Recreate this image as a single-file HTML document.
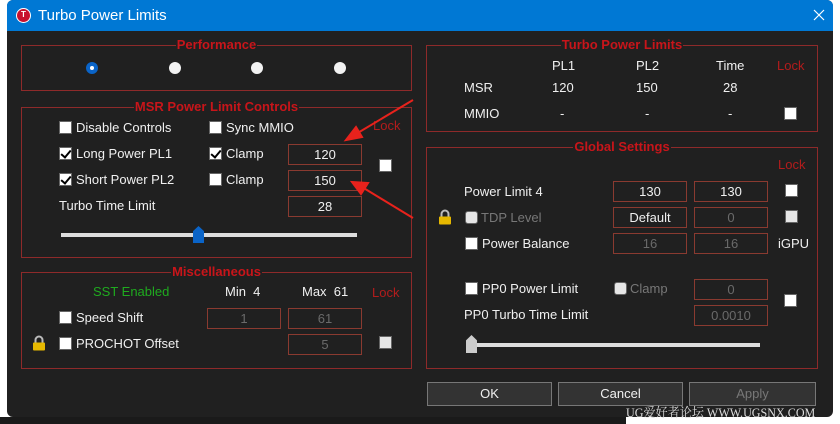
<!DOCTYPE html>
<html><head><meta charset="utf-8"><style>
*{box-sizing:border-box;margin:0;padding:0}
body{width:840px;height:424px;overflow:hidden;background:#fff;font-family:"Liberation Sans","Noto Sans CJK SC",sans-serif;position:relative}
.a{position:absolute;white-space:nowrap}
.win{position:absolute;left:7px;top:0;width:826px;height:417px;background:#202020;border-radius:6px;overflow:hidden}
.tb{position:absolute;left:0;top:0;width:826px;height:31px;background:#0078d4}
.box{position:absolute;border:1.5px solid #8e2a2a}
.ttl{position:absolute;top:-9px;left:0;right:0;text-align:center;font:bold 13px "Liberation Sans",sans-serif;color:#c8151a}
.ttl span{background:#202020;padding:0 1px}
.t{position:absolute;color:#f0f0f0;font-size:13px;white-space:nowrap;line-height:16px}
.g{color:#777}
.r{color:#b31c1c}
.cb{position:absolute;width:13px;height:13px;background:#fff;border:1px solid #666}
.cb.k::after{content:"";position:absolute;left:3px;top:0px;width:4px;height:8px;border:solid #000;border-width:0 2px 2px 0;transform:rotate(40deg)}
.cb.d{background:#e6e6e6}
.in{position:absolute;height:21px;border:1px solid #8a3a30;color:#f0f0f0;font-size:13px;text-align:center;line-height:19px}
.in.g{color:#6a6a6a}
.rad{position:absolute;width:12px;height:12px;border-radius:50%;background:#f2f2f2}
.btn{position:absolute;height:24px;border:1px solid #777;background:#333;color:#f0f0f0;font-size:13px;text-align:center;line-height:22px}
.lock{position:absolute;width:14px;height:16px}
</style></head><body>
<div class="win">
<div class="tb"></div>
<div class="a" style="left:9px;top:8px;width:15px;height:15px;border-radius:50%;background:#c8102e;border:1.5px solid #fff;color:#fff;font:bold 8px sans-serif;text-align:center;line-height:12px">T</div>
<div class="a" style="left:31px;top:7px;color:#fff;font-size:15px">Turbo Power Limits</div>
<svg class="a" style="left:806px;top:9px" width="12" height="12"><path d="M1 1L11 11M11 1L1 11" stroke="#fff" stroke-width="1.2"/></svg>
</div>
<!-- Performance -->
<div class="box" style="left:21px;top:45px;width:391px;height:46px"><div class="ttl"><span>Performance</span></div></div>
<div class="rad" style="left:86px;top:62px;background:#0a64c8"><div style="position:absolute;left:4px;top:4px;width:4px;height:4px;border-radius:50%;background:#fff"></div></div>
<div class="rad" style="left:169px;top:62px"></div>
<div class="rad" style="left:251px;top:62px"></div>
<div class="rad" style="left:334px;top:62px"></div>
<!-- MSR -->
<div class="box" style="left:21px;top:107px;width:391px;height:151px"><div class="ttl"><span>MSR Power Limit Controls</span></div></div>
<div class="cb" style="left:59px;top:121px"></div><div class="t" style="left:76px;top:120px">Disable Controls</div>
<div class="cb" style="left:209px;top:121px"></div><div class="t" style="left:226px;top:120px">Sync MMIO</div>
<div class="cb k" style="left:59px;top:147px"></div><div class="t" style="left:76px;top:146px">Long Power PL1</div>
<div class="cb k" style="left:209px;top:147px"></div><div class="t" style="left:226px;top:146px">Clamp</div>
<div class="cb k" style="left:59px;top:173px"></div><div class="t" style="left:76px;top:172px">Short Power PL2</div>
<div class="cb" style="left:209px;top:173px"></div><div class="t" style="left:226px;top:172px">Clamp</div>
<div class="t" style="left:59px;top:198px">Turbo Time Limit</div>
<div class="in" style="left:288px;top:144px;width:74px">120</div>
<div class="in" style="left:288px;top:170px;width:74px">150</div>
<div class="in" style="left:288px;top:196px;width:74px">28</div>
<div class="t r" style="left:373px;top:118px">Lock</div>
<div class="cb" style="left:379px;top:159px"></div>
<div class="a" style="left:61px;top:233px;width:296px;height:4px;background:#ddd"></div>
<div class="a" style="left:193px;top:226px;width:11px;height:17px;background:#0a64c8;clip-path:polygon(50% 0,100% 30%,100% 100%,0 100%,0 30%)"></div>
<!-- Misc -->
<div class="box" style="left:21px;top:272px;width:391px;height:97px"><div class="ttl"><span>Miscellaneous</span></div></div>
<div class="t" style="left:93px;top:284px;color:#1faa1f">SST Enabled</div>
<div class="t" style="left:225px;top:284px">Min&nbsp; 4</div>
<div class="t" style="left:302px;top:284px">Max&nbsp; 61</div>
<div class="t r" style="left:372px;top:285px">Lock</div>
<div class="cb" style="left:59px;top:311px"></div><div class="t" style="left:76px;top:310px">Speed Shift</div>
<div class="in g" style="left:207px;top:308px;width:74px">1</div>
<div class="in g" style="left:288px;top:308px;width:74px">61</div>
<div class="cb" style="left:59px;top:337px"></div><div class="t" style="left:76px;top:336px">PROCHOT Offset</div>
<div class="in g" style="left:288px;top:334px;width:74px">5</div>
<div class="cb d" style="left:379px;top:336px"></div>
<svg class="lock" style="left:32px;top:335px" viewBox="0 0 14 16"><path d="M3.5 8V5a3.5 3.5 0 0 1 7 0v3" fill="none" stroke="#bbb" stroke-width="2"/><rect x="1" y="7.5" width="12" height="8" rx="1" fill="#e6b800"/></svg>
<!-- Turbo Power Limits -->
<div class="box" style="left:426px;top:45px;width:392px;height:87px"><div class="ttl"><span>Turbo Power Limits</span></div></div>
<div class="t" style="left:552px;top:58px">PL1</div>
<div class="t" style="left:636px;top:58px">PL2</div>
<div class="t" style="left:716px;top:58px">Time</div>
<div class="t r" style="left:777px;top:58px">Lock</div>
<div class="t" style="left:464px;top:80px">MSR</div>
<div class="t" style="left:552px;top:80px">120</div>
<div class="t" style="left:636px;top:80px">150</div>
<div class="t" style="left:723px;top:80px">28</div>
<div class="t" style="left:464px;top:106px">MMIO</div>
<div class="t" style="left:560px;top:106px">-</div>
<div class="t" style="left:645px;top:106px">-</div>
<div class="t" style="left:728px;top:106px">-</div>
<div class="cb" style="left:784px;top:107px"></div>
<!-- Global -->
<div class="box" style="left:426px;top:147px;width:392px;height:222px"><div class="ttl"><span>Global Settings</span></div></div>
<div class="t r" style="left:778px;top:157px">Lock</div>
<div class="t" style="left:464px;top:184px">Power Limit 4</div>
<div class="in" style="left:613px;top:181px;width:74px">130</div>
<div class="in" style="left:694px;top:181px;width:74px">130</div>
<div class="cb" style="left:785px;top:184px"></div>
<svg class="lock" style="left:438px;top:209px" viewBox="0 0 14 16"><path d="M3.5 8V5a3.5 3.5 0 0 1 7 0v3" fill="none" stroke="#bbb" stroke-width="2"/><rect x="1" y="7.5" width="12" height="8" rx="1" fill="#e6b800"/></svg>
<div class="cb d" style="left:465px;top:211px;border-radius:3px"></div><div class="t g" style="left:481px;top:210px">TDP Level</div>
<div class="in" style="left:613px;top:207px;width:74px">Default</div>
<div class="in g" style="left:694px;top:207px;width:74px">0</div>
<div class="cb d" style="left:785px;top:210px"></div>
<div class="cb" style="left:465px;top:237px"></div><div class="t" style="left:482px;top:236px">Power Balance</div>
<div class="in g" style="left:613px;top:233px;width:74px">16</div>
<div class="in g" style="left:694px;top:233px;width:74px">16</div>
<div class="t" style="left:778px;top:236px">iGPU</div>
<div class="cb" style="left:465px;top:282px"></div><div class="t" style="left:482px;top:281px">PP0 Power Limit</div>
<div class="cb d" style="left:614px;top:282px;border-radius:3px"></div><div class="t g" style="left:630px;top:281px">Clamp</div>
<div class="in g" style="left:694px;top:279px;width:74px">0</div>
<div class="cb" style="left:784px;top:294px"></div>
<div class="t" style="left:464px;top:307px">PP0 Turbo Time Limit</div>
<div class="in g" style="left:694px;top:305px;width:74px">0.0010</div>
<div class="a" style="left:470px;top:343px;width:290px;height:4px;background:#ddd"></div>
<div class="a" style="left:466px;top:335px;width:11px;height:18px;background:#ccc;clip-path:polygon(50% 0,100% 30%,100% 100%,0 100%,0 30%)"></div>
<!-- buttons -->
<div class="btn" style="left:427px;top:382px;width:125px">OK</div>
<div class="btn" style="left:558px;top:382px;width:125px">Cancel</div>
<div class="btn" style="left:689px;top:382px;width:127px;color:#777">Apply</div>
<!-- taskbar hint -->
<div class="a" style="left:0;top:417px;width:840px;height:7px;background:#1a1a1a"></div>
<div class="a" style="left:626px;top:417px;width:214px;height:7px;background:#fff"></div>
<div class="a" style="left:626px;top:402px;font-family:'Liberation Serif','Noto Serif CJK SC',serif;font-size:13px;color:#ddd;transform:scaleX(0.93);transform-origin:left">UG爱好者论坛 WWW.UGSNX.COM</div>
<svg class="a" style="left:0;top:0" width="840" height="424">
<g stroke="#e8221c" stroke-width="2" fill="#e8221c">
<line x1="413" y1="100" x2="356" y2="134"/><polygon points="346,140 356,127 362,137"/>
<line x1="413" y1="218" x2="362" y2="187"/><polygon points="352,182 368,183 361,194"/>
</g></svg>
</body></html>
